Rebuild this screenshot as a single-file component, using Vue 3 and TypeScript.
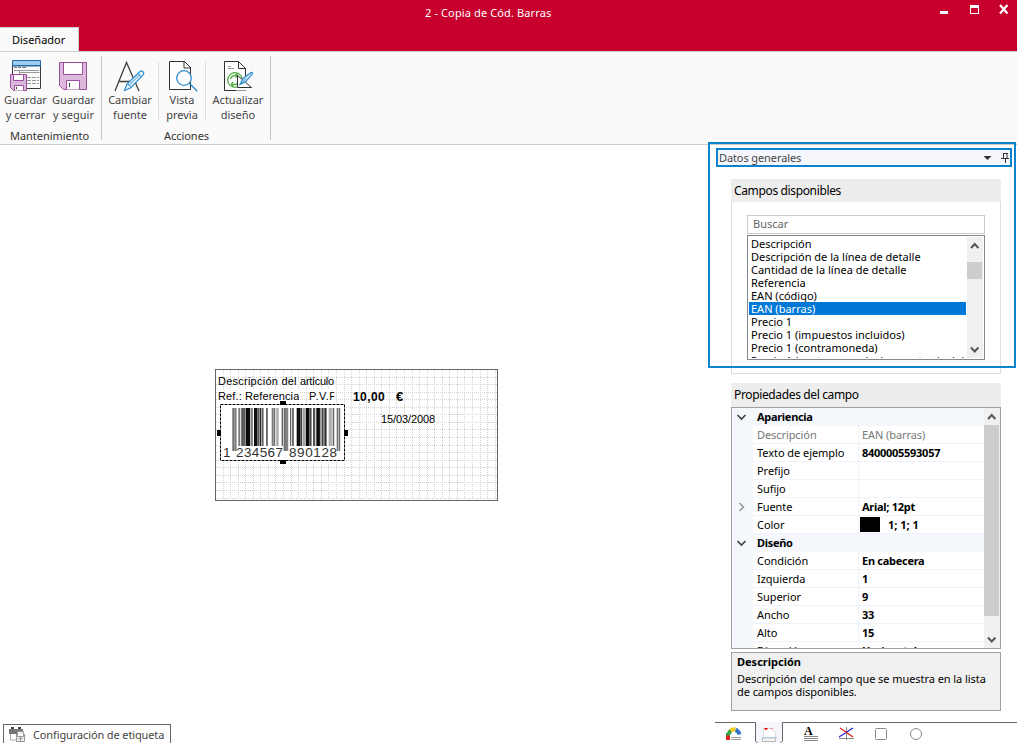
<script setup lang="ts">
interface Row { label: string; value?: string; kind?: 'cat' | 'dim' | 'sub' | 'color' }

const fields: string[] = [
  'Descripción', 'Descripción de la línea de detalle', 'Cantidad de la línea de detalle', 'Referencia',
  'EAN (código)', 'EAN (barras)', 'Precio 1', 'Precio 1 (impuestos incluidos)', 'Precio 1 (contramoneda)',
  'Precio 1 (contramoneda, impuestos incluidos)',
]
const selected = 5

const rows: Row[] = [
  { label: 'Apariencia', kind: 'cat' },
  { label: 'Descripción', value: 'EAN (barras)', kind: 'dim' },
  { label: 'Texto de ejemplo', value: '8400005593057' },
  { label: 'Prefijo', value: '' },
  { label: 'Sufijo', value: '' },
  { label: 'Fuente', value: 'Arial; 12pt', kind: 'sub' },
  { label: 'Color', value: '1; 1; 1', kind: 'color' },
  { label: 'Diseño', kind: 'cat' },
  { label: 'Condición', value: 'En cabecera' },
  { label: 'Izquierda', value: '1' },
  { label: 'Superior', value: '9' },
  { label: 'Ancho', value: '33' },
  { label: 'Alto', value: '15' },
  { label: 'Dirección', value: 'Horizontal' },
]

// 2 mm grid at 96 dpi
const step = 7.56
const cols = Array.from({ length: 37 }, (_, i) => Math.round((i + 1) * step) + 0.5).filter((x) => x < 282)
const lines = Array.from({ length: 17 }, (_, i) => Math.round((i + 1) * step) + 0.5).filter((y) => y < 131)

// Preview bars in thirds of a pixel: start, end, gray level, guard flag
const strokes: [number, number, number, number?][] = [
  [37, 42, 110, 1], [43, 49, 125, 1], [55, 60, 120], [64, 68, 70], [69, 75, 95], [77, 90, 10], [94, 97, 60],
  [102, 112, 15], [114, 118, 85], [120, 123, 40], [125, 130, 100], [138, 143, 110], [155, 160, 125], [161, 165, 110],
  [169, 175, 165], [185, 188, 80], [191, 197, 110, 1], [198, 204, 130, 1], [210, 213, 100], [216, 221, 110],
  [230, 240, 15], [241, 246, 60], [250, 253, 110], [257, 268, 10], [270, 274, 75], [279, 285, 80], [289, 299, 10],
  [301, 304, 110], [306, 310, 60], [313, 319, 45], [326, 335, 175], [338, 342, 100], [350, 354, 115, 1], [356, 360, 115, 1],
]
const bars = strokes.map(([a, b, g, guard]) => ({
  x: a / 3, w: (b - a) / 3 + 0.25, h: guard ? 43 : 38, fill: `rgb(${g},${g},${g})`,
}))
</script>

<template>
  <div class="win">
    <header class="title">
      <span class="caption">2 - Copia de Cód. Barras</span>
      <div class="tab">Diseñador</div>
      <svg class="controls" width="77" height="20" viewBox="940 0 77 20">
        <path d="M940 11h8v3h-8z" fill="#fff" />
        <path d="M970 5h9v9h-9z M971 8v5h7V8z" fill="#fff" fill-rule="evenodd" />
        <path d="M1000 5l7.500 8.500M1007.500 5l-7.500 8.500" stroke="#fff" stroke-width="2.200" />
      </svg>
    </header>

    <nav class="ribbon">
      <section class="group g1">
        <div class="tools">
          <button class="tool t1">
            <svg width="36" height="34" viewBox="8 58 36 34">
              <path d="M12.500 66V60.500h28V66z" fill="#9fcbee" stroke="#1f69a8" />
              <path d="M12.500 66v8M27 88.500h13.500V66" fill="none" stroke="#3a3a3a" />
              <path d="M12.500 65.500h28" stroke="#1f69a8" />
              <path d="M14 67.500h3m1 0h3m1 0h4" stroke="#777" />
              <path d="M14 70.500h25M19.500 70v4M19.500 72.500h20" fill="none" stroke="#999" />
              <path d="M27 77.500h12M27 80.500h12M27 83.500h12" stroke="#999" stroke-dasharray="4 1" />
              <path d="M10.500 74.500h16v16h-13l-3-3z" fill="#dcb8dc" stroke="#9b4f9b" />
              <path d="M13.500 74.500h10v6h-10zM14.500 90.500v-5h9v5" fill="#fff" stroke="#9b4f9b" />
              <path d="M16.500 87v2" stroke="#444" />
            </svg>
            <span>Guardar<br>y cerrar</span>
          </button>
          <button class="tool t2">
            <svg width="36" height="34" viewBox="56 58 36 34">
              <path d="M59.500 62.500h27v27h-23l-4-4z" fill="#dcb8dc" stroke="#9b4f9b" />
              <path d="M63.500 62.500h19v12h-19zM66.500 89.500v-9h13v9" fill="#fff" stroke="#9b4f9b" />
              <path d="M69.500 83v4" stroke="#444" />
            </svg>
            <span>Guardar<br>y seguir</span>
          </button>
        </div>
        <div class="gname">Mantenimiento</div>
      </section>
      <section class="group g2">
        <div class="tools">
          <button class="tool t3">
            <svg width="36" height="34" viewBox="112 58 36 34">
              <path d="M115 91l11.500-28.500L139 91M119.500 81.500h12" fill="none" stroke="#404040" stroke-width="1.300" />
              <path d="M124.500 90.500l2.500-6.500L140 71.500q1.500-1.200 3 .2t.4 3L130.500 88z" fill="#e8f4fc" stroke="#2e8bcc" stroke-width="1.200" />
              <path d="M127.500 83.500l3.500 4M138 73.500l3.500 3.500M129 85.500L140 74.500" fill="none" stroke="#2e8bcc" />
            </svg>
            <span>Cambiar<br>fuente</span>
          </button>
          <i class="sep"></i>
          <button class="tool t4">
            <svg width="36" height="34" viewBox="164 58 36 34">
              <path d="M169.500 61.500h15l6 6v22h-21z" fill="#fff" stroke="#303030" />
              <path d="M184 61v7h7z" fill="#fff" stroke="#303030" />
              <circle cx="184" cy="78" r="7.300" fill="#fff" stroke="#2e8bcc" stroke-width="1.300" />
              <path d="M189.300 83.300l8 8" stroke="#2e8bcc" stroke-width="1.400" />
            </svg>
            <span>Vista<br>previa</span>
          </button>
          <i class="sep"></i>
          <button class="tool t5">
            <svg width="36" height="34" viewBox="220 58 36 34">
              <path d="M236 90.500h-11.500v-29h14l7 7V76" fill="#fff" stroke="#303030" />
              <path d="M238.500 61.500v7h7" fill="none" stroke="#303030" />
              <path d="M228 66.500h3M228 68.500h6M236 90.500h10" stroke="#999" />
              <circle cx="235" cy="80" r="7.300" fill="none" stroke="#55ad43" stroke-width="1.300" />
              <path d="M230.500 79q1-3.500 4.500-3.500h3M239.500 81q-1 3.500-4.500 3.500h-4M238 75.500l-2.500-2M238 75.500l-2.500 2M231 84.500l2-2.500M231 84.500l2.500 2" fill="none" stroke="#55ad43" stroke-width="1.300" />
              <path d="M237.500 75.500v12h14z" fill="#fff" stroke="#303030" />
              <path d="M240 84.500l3-6 8-6q1.500-.7 1.500 1.300l-7 8z" fill="#cfe8f8" stroke="#2e8bcc" stroke-width="1.200" />
              <path d="M240 84.500l6-6" stroke="#2e8bcc" />
            </svg>
            <span>Actualizar<br>diseño</span>
          </button>
        </div>
        <div class="gname">Acciones</div>
      </section>
    </nav>

    <main class="body">
      <div class="work">
        <div class="label">
          <svg class="grid" width="281" height="130" viewBox="1 1 281 130" shape-rendering="crispEdges">
            <g stroke="#d3d3d3" stroke-dasharray="1 1">
              <line v-for="x in cols" :key="'c' + x" :x1="x" y1="1" :x2="x" y2="131" />
              <line v-for="y in lines" :key="'r' + y" x1="1" :y1="y" x2="282" :y2="y" />
            </g>
          </svg>
          <span class="f desc">Descripción del <b>artículo</b></span>
          <span class="f ref">Ref.: Referencia</span>
          <span class="f pvp">P.V.P</span>
          <span class="f price">10,00</span>
          <span class="f euro">€</span>
          <span class="f date">15/03/2008</span>
          <svg class="code" width="131" height="64" viewBox="-3 -3 131 64">
            <rect x="0" y="0" width="125" height="57" fill="#fff" />
            <rect x=".5" y=".5" width="124" height="56" fill="none" stroke="#000" stroke-dasharray="3 1" />
            <rect v-for="b in bars" :key="b.x" :x="b.x" y="4" :width="b.w" :height="b.h" :fill="b.fill" />
            <g class="digits">
              <text x="3" y="53">1</text>
              <text x="16" y="53" textLength="47">234567</text>
              <text x="69" y="53" textLength="48">890128</text>
            </g>
            <path d="M60-3h6v4h-6zM60 56h6v4h-6zM-3 26h4v6h-4zM124 26h4v6h-4z" />
          </svg>
        </div>
        <div class="config">
          <svg width="20" height="17" viewBox="8 726 20 17">
            <path d="M9 729h14v5H9z" fill="#777" /><path d="M11 727h3v2h-3zM18 727h3v2h-3z" fill="#444" />
            <path d="M10.500 734v6h8" fill="#fff" stroke="#aaa" />
            <path d="M17.500 731.500h6v5h-6zM16.500 734v7.500h8V734" fill="#eee" stroke="#999" />
            <path d="M20.500 737v4M18.500 738.500h4" stroke="#999" />
          </svg>
          <span>Configuración de etiqueta</span>
        </div>
      </div>

      <aside class="side">
        <div class="phead">
          <span>Datos generales</span>
          <svg width="30" height="15" viewBox="980 150 30 15">
            <path d="M983.500 156h8l-4 4z" fill="#333" />
            <path d="M1003.500 153v5M1007 153v5M1003 153.500h5M1001 158.500h8M1005.500 159v4" stroke="#333" fill="none" />
          </svg>
        </div>
        <div class="box">
          <h3>Campos disponibles</h3>
          <div class="search">Buscar</div>
          <div class="list">
            <ul><li v-for="(f, i) in fields" :key="f" :class="{ on: i === selected }">{{ f }}</li></ul>
            <div class="bar">
              <svg width="16" height="17" viewBox="0 0 16 17"><path d="M4 11l3.700-4 3.700 4" /></svg>
              <i class="thumb"></i>
              <svg width="16" height="17" viewBox="0 0 16 17"><path d="M4 6.500l3.700 4 3.700-4" /></svg>
            </div>
          </div>
        </div>
        <h3 class="h2">Propiedades del campo</h3>
        <div class="props">
          <div class="table">
            <div v-for="r in rows" :key="r.label + r.value" class="row" :class="r.kind">
              <span class="gut">
                <svg v-if="r.kind === 'cat'" width="12" height="10" viewBox="0 0 12 10"><path d="M1.500 3l4 4 4-4" stroke="#404040" /></svg>
                <svg v-if="r.kind === 'sub'" width="12" height="10" viewBox="0 0 12 10"><path d="M3.500 1l4 4-4 4" stroke="#999" /></svg>
              </span>
              <span class="lab">{{ r.label }}</span>
              <span v-if="r.kind !== 'cat'" class="val"><i v-if="r.kind === 'color'"></i>{{ r.value }}</span>
            </div>
          </div>
          <div class="bar">
            <svg width="16" height="17" viewBox="0 0 16 17"><path d="M4 11l3.700-4 3.700 4" /></svg>
            <i class="thumb"></i>
            <svg width="16" height="17" viewBox="0 0 16 17"><path d="M4 6.500l3.700 4 3.700-4" /></svg>
          </div>
        </div>
        <div class="help"><strong>Descripción</strong><p>Descripción del campo que se muestra en la lista<br>de campos disponibles.</p></div>
        <svg class="tabs" width="302" height="21" viewBox="715 722 302 21">
          <path d="M756 722h26v21h-26z" fill="#f5f6fb" />
          <path d="M715 722.500h40.500V741l2 2M1017 722.500H782.500V741l-2 2" fill="none" stroke="#666" />
          <path d="M728 733v5" stroke="#35a545" stroke-width="4" /><path d="M728 735.500v4.500" stroke="#e02020" stroke-width="4" />
          <path d="M728.500 734l2.500-4" stroke="#35a545" stroke-width="4" />
          <path d="M730.500 730.500q2-1.500 5-1" stroke="#f2cc22" stroke-width="4" fill="none" />
          <path d="M735.500 730q3 1 4 4.500" stroke="#3375c8" stroke-width="4" fill="none" />
          <path d="M731 737.500h10M731 739.500h10" stroke="#999" />
          <path d="M763.500 740v-11.500h8l4 4V740" fill="#fff" stroke="#ddd" />
          <path d="M762.500 738h13v3.500h-13z" fill="#f5f5f5" stroke="#bbb" /><path d="M762 737.500h15" stroke="#a8d4ef" />
          <path d="M764 728h4l-2 2.500z" fill="#e00000" /><path d="M770 728.500h3" stroke="#ee9999" />
          <text x="804" y="735">A</text>
          <path d="M804 736.500h14M804 738.500h14M804 740.500h14" stroke="#888" />
          <path d="M846.500 727v13M839 738.500h15" stroke="#888" />
          <path d="M839 737l14-9" stroke="#2424d8" stroke-width="1.300" /><path d="M840 728l13 9" stroke="#e02020" stroke-width="1.300" />
          <rect x="875.500" y="728.500" width="11" height="11" rx="1" fill="#fff" stroke="#888" />
          <circle cx="916" cy="734" r="5.500" fill="#fff" stroke="#888" />
        </svg>
        <div class="mark"></div>
      </aside>
    </main>
  </div>
</template>

<style>
html, body { margin: 0; overflow: hidden; background: #fff; }
</style>

<style scoped>
* { box-sizing: border-box; }
.win { width: 1017px; height: 743px; display: flex; flex-direction: column; overflow: hidden; font: 11px/15px "Noto Sans", "Open Sans", sans-serif; color: #000; white-space: nowrap; }
svg { display: block; flex: none; }
.title { height: 51px; background: #c8002d; position: relative; flex: none; display: flex; align-items: flex-end; }
.caption { position: absolute; left: 425px; top: 5px; color: #fff; letter-spacing: .12px; }
.controls { position: absolute; left: 940px; top: 0; }
.tab { width: 79px; height: 24px; background: #fafafa; border: 1px solid #ccc; border-left: 0; border-bottom: 0; padding: 4px 0 0 12px; }
.ribbon { height: 94px; flex: none; background: #fafafa; border-top: 1px solid #ccc; border-bottom: 1px solid #ccc; display: flex; padding-top: 4px; }
.group { height: 84px; border-right: 1px solid #c6c6c6; display: flex; flex-direction: column; }
.g1 { width: 102px; }
.g2 { width: 169px; }
.tools { height: 73px; display: flex; align-items: flex-start; flex: none; }
.tool { border: 0; background: none; padding: 2px 0 0; font: inherit; color: #444; display: flex; flex-direction: column; align-items: center; text-align: center; }
.t1 { width: 51px; }
.t2 { width: 45px; }
.t3 { width: 56px; }
.t4 { width: 46px; }
.t5 { width: 64px; }
.sep { width: 1px; height: 59px; margin-top: 6px; background: #ddd; }
.gname { text-align: center; color: #333; line-height: 14px; padding: 0 3px 0 1px; height: 11px; letter-spacing: -.03px; }
.g2 .gname { padding-left: 4px; }
.body { display: flex; flex: 1; min-height: 0; }
.work { width: 708px; position: relative; display: flex; flex-direction: column; justify-content: flex-end; padding-left: 3px; }
.label { position: absolute; left: 215px; top: 224px; width: 283px; height: 132px; border: 1px solid #666; font-family: "Liberation Sans", Arial, sans-serif; }
.f { position: absolute; font-size: 11px; line-height: 14px; background: #fff; overflow: hidden; }
.desc { left: 2px; top: 4px; letter-spacing: .24px; background: none; }
.desc b { font-weight: 400; letter-spacing: -.3px; }
.ref { left: 2px; top: 19px; letter-spacing: .12px; }
.pvp { left: 93px; top: 19px; width: 25px; letter-spacing: .5px; }
.price { left: 137px; top: 20px; font-size: 12px; font-weight: 700; background: none; letter-spacing: .4px; }
.euro { left: 180px; top: 20px; font-size: 13px; font-weight: 700; background: none; }
.date { left: 165px; top: 42px; background: none; letter-spacing: -.1px; }
.code { position: absolute; left: 1px; top: 31px; }
.digits { font-size: 13.5px; fill: #333; }
.config { width: 168px; height: 19px; border: 1px solid #666; border-bottom: 0; color: #444; display: flex; padding: 1px 0 0 4px; }
.config span { padding: 1px 0 0 5px; letter-spacing: -.12px; }
.side { width: 309px; position: relative; display: flex; flex-direction: column; padding-top: 3px; }
.mark { position: absolute; left: 0; top: -3px; width: 308px; height: 226px; border: 2px solid #0a84cc; }
.phead { margin-left: 8px; width: 296px; height: 19px; border: 2px solid #0a84cc; background: #f6f7fc; color: #444; display: flex; justify-content: space-between; align-items: center; padding-left: 1px; flex: none; letter-spacing: -.1px; }
.box { margin: 12px 0 0 23px; width: 270px; height: 195px; border: 1px solid #ddd; border-top: 0; flex: none; }
h3 { margin: 0; font-size: 12px; line-height: 23px; height: 23px; font-weight: 400; background: #ededed; padding-left: 3px; flex: none; letter-spacing: -.36px; }
.box h3 { margin: 0 -1px; }
.h2 { margin: 9px 0 0 23px; width: 270px; height: 24px; }
.search { margin: 13px 15px 0; height: 19px; border: 1px solid #ccc; color: #666; padding: 0 5px; }
.list { margin: 1px 15px 0; height: 125px; border: 1px solid #828790; display: flex; padding: 1px; overflow: hidden; }
ul { list-style: none; margin: 0; padding: 0; width: 218px; height: 121px; overflow: hidden; }
li { height: 13px; line-height: 13px; padding-left: 2px; width: 217px; overflow: hidden; }
li.on { background: #0078d7; color: #fff; }
.bar { background: #f0f0f0; width: 16px; display: flex; flex-direction: column; justify-content: space-between; }
.bar path { fill: none; stroke: #555; stroke-width: 2; }
.list .thumb { height: 17px; background: #cdcdcd; margin: 8px 1px 62px 0; }
.props { margin-left: 23px; width: 270px; height: 242px; border: 1px solid #a0a0a0; display: flex; flex: none; }
.table { width: 252px; height: 240px; overflow: hidden; }
.row { display: flex; height: 18px; line-height: 17px; background: #fff; }
.gut { width: 21px; background: #f4f7fc; padding: 4px 0 0 4px; flex: none; }
.gut path { fill: none; stroke-width: 1.6; }
.lab { width: 106px; padding-left: 4px; border-bottom: 1px solid #f0f3fa; border-right: 1px solid #f0f3fa; letter-spacing: -.05px; }
.val { flex: 1; padding-left: 3px; font-weight: 700; border-bottom: 1px solid #f0f3fa; letter-spacing: -.28px; }
.val i { float: left; width: 20px; height: 15px; background: #000; margin: 1px 8px 0 -2px; }
.color .val { letter-spacing: 0; }
.cat { background: #f4f7fc; }
.cat .lab { font-weight: 700; border: 0; letter-spacing: -.3px; }
.dim .lab, .dim .val { color: #777; font-weight: 400; letter-spacing: -.08px; }
.props .thumb { height: 191px; background: #cdcdcd; margin: 0 1px 15px 0; }
.help { margin: 3px 0 0 23px; width: 270px; height: 59px; border: 1px solid #a0a0a0; background: #f0f0f0; padding: 2px 5px; line-height: 14px; flex: none; }
.help p { margin: 3px 0 0; line-height: 13px; letter-spacing: -.06px; }
.tabs { margin: 11px 0 0 7px; }
.tabs text { font: 700 12px "Liberation Serif", serif; }
</style>
